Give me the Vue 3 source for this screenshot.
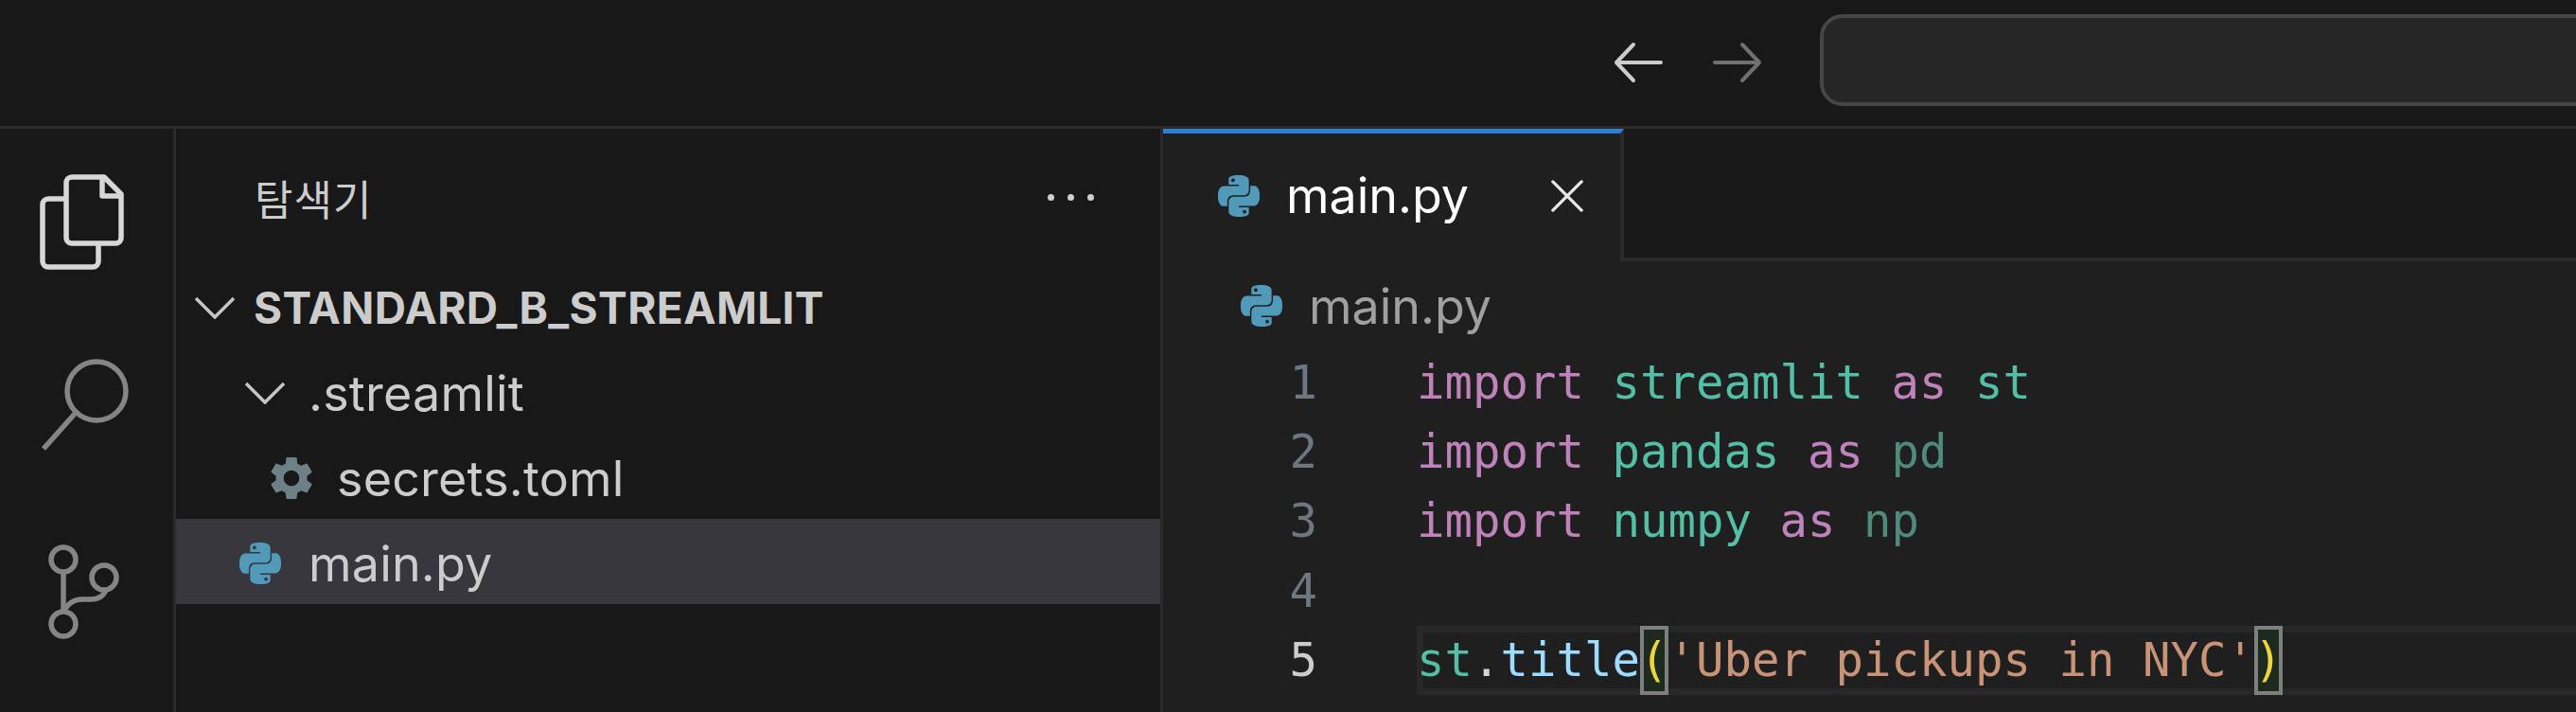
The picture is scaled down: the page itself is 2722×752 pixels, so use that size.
<script setup>
const pyPath = "M14.25.18l.9.2.73.26.59.3.45.32.34.34.25.34.16.33.1.3.04.26.02.2-.01.13V8.5l-.05.63-.13.55-.21.46-.26.38-.3.31-.33.25-.35.19-.35.14-.33.1-.3.07-.26.04-.21.02H8.77l-.69.05-.59.14-.5.22-.41.27-.33.32-.27.35-.2.36-.15.37-.1.35-.07.32-.04.27-.02.21v3.06H3.17l-.21-.03-.28-.07-.32-.12-.35-.18-.36-.26-.36-.36-.35-.46-.32-.59-.28-.73-.21-.88-.14-1.05-.05-1.23.06-1.22.16-1.04.24-.87.32-.71.36-.57.4-.44.42-.33.42-.24.4-.16.36-.1.32-.05.24-.01h.16l.06.01h8.16v-.83H6.18l-.01-2.75-.02-.37.05-.34.11-.31.17-.28.25-.26.31-.23.38-.2.44-.18.51-.15.58-.12.64-.1.71-.06.77-.04.84-.02 1.27.05zm-6.3 1.98l-.23.33-.08.41.08.41.23.34.33.22.41.09.41-.09.33-.22.23-.34.08-.41-.08-.41-.23-.33-.33-.22-.41-.09-.41.09zm13.09 3.95l.28.06.32.12.35.18.36.27.36.35.35.47.32.59.28.73.21.88.14 1.04.05 1.23-.06 1.23-.16 1.04-.24.86-.32.71-.36.57-.4.45-.42.33-.42.24-.4.16-.36.09-.32.05-.24.02-.16-.01h-8.22v.82h5.84l.01 2.76.02.36-.05.34-.11.31-.17.29-.25.25-.31.24-.38.2-.44.17-.51.15-.58.13-.64.09-.71.07-.77.04-.84.01-1.27-.04-1.07-.14-.9-.2-.73-.25-.59-.3-.45-.33-.34-.34-.25-.34-.16-.33-.1-.3-.04-.25-.02-.2.01-.13v-5.34l.05-.64.13-.54.21-.46.26-.38.3-.32.33-.24.35-.2.35-.14.33-.1.3-.06.26-.04.21-.02.13-.01h5.84l.69-.05.59-.14.5-.21.41-.28.33-.32.27-.35.2-.36.15-.36.1-.35.07-.32.04-.28.02-.21V6.07h2.09l.14.01zm-6.47 14.25l-.23.33-.08.41.08.41.23.33.33.23.41.08.41-.08.33-.23.23-.33.08-.41-.08-.41-.23-.33-.33-.23-.41-.08-.41.08z";
const gearPath = "M19.14 12.94c.04-.3.06-.61.06-.94 0-.32-.02-.64-.07-.94l2.03-1.58a.49.49 0 0 0 .12-.61l-1.92-3.32a.488.488 0 0 0-.59-.22l-2.39.96c-.5-.38-1.03-.7-1.62-.94l-.36-2.54a.484.484 0 0 0-.48-.41h-3.84c-.24 0-.43.17-.47.41l-.36 2.54c-.59.24-1.13.57-1.62.94l-2.39-.96c-.22-.08-.47 0-.59.22L2.74 8.87c-.12.21-.08.47.12.61l2.03 1.58c-.05.3-.09.63-.09.94s.02.64.07.94l-2.03 1.58a.49.49 0 0 0-.12.61l1.92 3.32c.12.22.37.29.59.22l2.39-.96c.5.38 1.03.7 1.62.94l.36 2.54c.05.24.24.41.48.41h3.84c.24 0 .44-.17.47-.41l.36-2.54c.59-.24 1.13-.56 1.62-.94l2.39.96c.22.08.47 0 .59-.22l1.92-3.32c.12-.22.07-.47-.12-.61l-2.01-1.58zM12 15.6c-1.98 0-3.6-1.62-3.6-3.6s1.62-3.6 3.6-3.6 3.6 1.62 3.6 3.6-1.62 3.6-3.6 3.6z";
const lineNumbers = [1, 2, 3, 4, 5];
</script>

<template>
  <div class="window">
    <header class="titlebar">
      <div class="nav">
        <svg class="nav-icon" viewBox="0 0 52 44"><path class="back" d="M50 22H3M21 3L3 22l18 19" /></svg>
        <svg class="nav-icon" viewBox="0 0 52 44"><path class="forward" d="M2 22h47M31 3l18 19-18 19" /></svg>
      </div>
      <div class="command"></div>
    </header>
    <div class="workbench">
      <nav class="activity">
        <svg class="act-icon" viewBox="0 136 183 186">
          <path class="act-on" d="M69 210H51a6 6 0 0 0-6 6v60a6 6 0 0 0 6 6h47a6 6 0 0 0 6-6V258" />
          <path class="act-on" d="M76 187h34l18 18v46a6 6 0 0 1-6 6H76a6 6 0 0 1-6-6v-58a6 6 0 0 1 6-6z" />
          <path class="act-on" d="M108 187v20h20" />
        </svg>
        <svg class="act-icon" viewBox="0 322 183 186">
          <circle class="act-off" cx="102" cy="413" r="31" />
          <path class="act-off" d="M79 437L46 474" />
        </svg>
        <svg class="act-icon" viewBox="0 508 183 186">
          <circle class="act-off" cx="67" cy="591" r="13" />
          <circle class="act-off" cx="67" cy="659" r="13" />
          <circle class="act-off" cx="110" cy="610" r="13" />
          <path class="act-off" d="M67 604v42M67 647q6-14 20-14h9q12 0 16-10" />
        </svg>
      </nav>
      <aside class="sidebar">
        <div class="side-head">
          <span class="side-title">탐색기</span>
          <span class="dots"><i></i><i></i><i></i></span>
        </div>
        <div class="row root">
          <svg class="chev" viewBox="0 0 44 24"><path d="M2 2l20 20L42 2" /></svg>
          <span>STANDARD_B_STREAMLIT</span>
        </div>
        <div class="row folder">
          <svg class="chev" viewBox="0 0 44 24"><path d="M2 2l20 20L42 2" /></svg>
          <span>.streamlit</span>
        </div>
        <div class="row toml">
          <svg class="gear" viewBox="2.5 2 19 20"><path :d="gearPath" /></svg>
          <span>secrets.toml</span>
        </div>
        <div class="row py selected">
          <svg class="python" viewBox="0 0 24 24"><path :d="pyPath" /></svg>
          <span>main.py</span>
        </div>
      </aside>
      <main class="editor">
        <div class="tabs">
          <div class="tab">
            <svg class="python" viewBox="0 0 24 24"><path :d="pyPath" /></svg>
            <span class="tab-name">main.py</span>
            <svg class="close" viewBox="0 0 36 36"><path d="M2 2l32 32M34 2L2 34" /></svg>
          </div>
          <div class="tabs-rest"></div>
        </div>
        <div class="crumbs">
          <svg class="python" viewBox="0 0 24 24"><path :d="pyPath" /></svg>
          <span>main.py</span>
        </div>
        <div class="code-area">
          <div class="gutter">
            <div v-for="n in lineNumbers" :key="n" class="num" :class="{ active: n === 5 }">{{ n }}</div>
          </div>
          <div class="code">
            <div class="line"><span class="kw">import</span> <span class="mod">streamlit</span> <span class="kw">as</span> <span class="mod">st</span></div>
            <div class="line"><span class="kw">import</span> <span class="mod">pandas</span> <span class="kw">as</span> <span class="dim">pd</span></div>
            <div class="line"><span class="kw">import</span> <span class="mod">numpy</span> <span class="kw">as</span> <span class="dim">np</span></div>
            <div class="line"></div>
            <div class="line current"><span class="mod">st</span><span class="punct">.</span><span class="fn">title</span><span class="brace">(</span><span class="str">'Uber pickups in NYC'</span><span class="brace">)</span></div>
          </div>
        </div>
      </main>
    </div>
  </div>
</template>

<style scoped>
.window {
  width: 2722px;
  height: 752px;
  display: flex;
  flex-direction: column;
  overflow: hidden;
  background: #181818;
  font-family: "Inter", "Noto Sans CJK KR", sans-serif;
}
.titlebar {
  height: 136px;
  flex: none;
  box-sizing: border-box;
  border-bottom: 3px solid #2b2b2b;
  display: flex;
  align-items: flex-start;
  padding-left: 1705px;
}
.nav {
  display: flex;
  gap: 53px;
  padding-top: 44px;
  margin-right: 61px;
}
.nav-icon {
  width: 52px;
  height: 44px;
  fill: none;
  stroke-width: 4;
  stroke-linecap: round;
  stroke-linejoin: round;
}
.back { stroke: #cccccc; }
.forward { stroke: #707070; }
.command {
  flex: none;
  width: 1200px;
  height: 97px;
  margin-top: 15px;
  box-sizing: border-box;
  background: #262626;
  border: 4px solid #464646;
  border-radius: 24px;
}
.workbench {
  flex: 1;
  min-height: 0;
  display: flex;
}
.activity {
  width: 186px;
  flex: none;
  box-sizing: border-box;
  border-right: 3px solid #2b2b2b;
  display: flex;
  flex-direction: column;
}
.act-icon {
  width: 183px;
  height: 186px;
  flex: none;
  fill: none;
}
.act-on { stroke: #d7d7d7; stroke-width: 5.5; stroke-linejoin: round; fill: none; }
.act-off { stroke: #858585; stroke-width: 5.5; fill: none; }
.sidebar {
  width: 1040px;
  flex: none;
  color: #cccccc;
  font-size: 52px;
  letter-spacing: 0.2px;
}
.side-head {
  height: 142px;
  box-sizing: border-box;
  padding: 51px 0 0 83px;
  display: flex;
  align-items: flex-start;
  justify-content: space-between;
}
.side-title {
  font-size: 44px;
  line-height: 50px;
  font-weight: 400;
  letter-spacing: 1px;
}
.dots {
  display: flex;
  gap: 14px;
  margin: 18px 70px 0 0;
}
.dots i {
  display: block;
  width: 7px;
  height: 7px;
  border-radius: 50%;
  background: #cfcfcf;
}
.row {
  height: 90px;
  box-sizing: border-box;
  padding-top: 4px;
  display: flex;
  align-items: center;
  white-space: nowrap;
}
.root {
  padding-left: 19px;
  font-weight: 700;
  font-size: 46px;
  letter-spacing: 0.4px;
}
.root .chev { margin-right: 19px; }
.folder { padding-left: 72px; }
.folder .chev { margin-right: 24px; }
.chev {
  width: 44px;
  height: 24px;
  flex: none;
  fill: none;
  stroke: #c5c5c5;
  stroke-width: 3.5;
}
.toml { padding-left: 99px; }
.gear {
  width: 46px;
  height: 46px;
  flex: none;
  fill: #6d8086;
  margin-right: 25px;
}
.py { padding-left: 67px; }
.python {
  width: 44px;
  height: 44px;
  flex: none;
  fill: #519aba;
  fill-rule: evenodd;
}
.py .python { margin-right: 29px; }
.selected { background: #37373d; }
.editor {
  flex: 1;
  min-width: 0;
  background: #1f1f1f;
  border-left: 3px solid #2b2b2b;
  display: flex;
  flex-direction: column;
}
.tabs {
  height: 140px;
  flex: none;
  display: flex;
}
.tab {
  width: 487px;
  flex: none;
  box-sizing: border-box;
  border-top: 5px solid #2f7fd6;
  border-right: 4px solid #2b2b2b;
  background: #1f1f1f;
  padding: 0 0 4px 58px;
  display: flex;
  align-items: center;
  font-size: 52px;
  color: #ffffff;
}
.tab-name { margin-left: 28px; }
.close {
  width: 34px;
  height: 34px;
  margin-left: 87px;
  fill: none;
  stroke: #e6e6e6;
  stroke-width: 3.5;
  stroke-linecap: round;
}
.tabs-rest {
  flex: 1;
  background: #181818;
  border-bottom: 4px solid #2b2b2b;
}
.crumbs {
  height: 92px;
  flex: none;
  box-sizing: border-box;
  padding: 2px 0 0 82px;
  display: flex;
  align-items: center;
  gap: 28px;
  font-size: 52px;
  color: #a0a0a0;
}
.code-area {
  display: flex;
  font-family: "DejaVu Sans Mono", monospace;
  font-size: 49px;
  line-height: 73.2px;
}
.gutter {
  width: 163px;
  flex: none;
  text-align: right;
  color: #6e7681;
}
.num.active { color: #cccccc; }
.code {
  flex: 1;
  min-width: 0;
  margin-left: 105px;
  white-space: pre;
  color: #d4d4d4;
}
.line { height: 73.2px; }
.current {
  width: calc(100% + 20px);
  box-shadow: inset 0 0 0 7px #282828;
}
.kw { color: #c082bb; }
.mod { color: #53bfa6; }
.dim { color: #4f8a7c; }
.fn { color: #9cdcfe; }
.str { color: #c99378; }
.punct { color: #d4d4d4; }
.brace {
  display: inline-block;
  color: #f0d43c;
  background: #1d2a20;
  box-shadow: inset 0 0 0 4px #7f7f7f;
}
</style>

<style>
html, body {
  margin: 0;
  background: #181818;
  overflow: hidden;
}
</style>
